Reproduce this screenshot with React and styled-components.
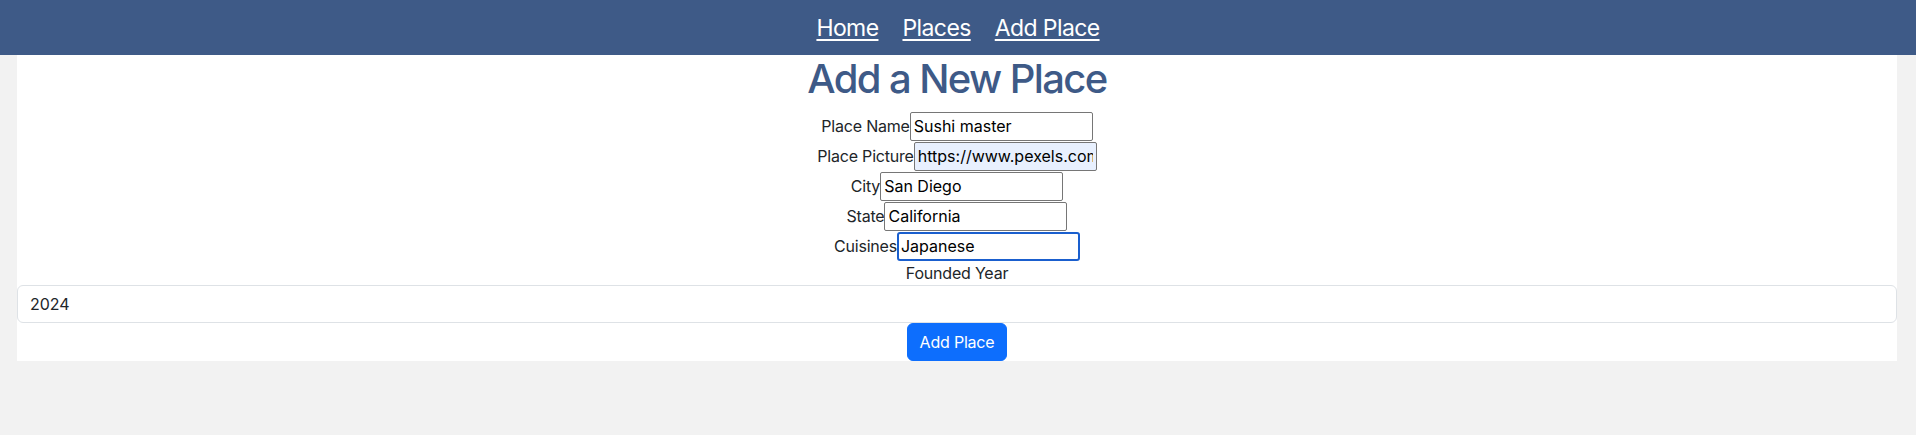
import { createGlobalStyle, styled } from "styled-components"

const GlobalStyle = createGlobalStyle`
  *, *::before, *::after {
    box-sizing: border-box;
  }

  body {
    margin: 0;
    background: #f2f2f2;
    font-family: Inter, "Noto Sans", "Liberation Sans", sans-serif;
    font-size: 16px;
    line-height: 1.5;
    color: #212529;
  }
`

const Nav = styled.nav`
  height: 55px;
  display: flex;
  justify-content: center;
  align-items: center;
  gap: 24px;
  background: #3e5a87;
  padding-top: 2px;
`

const NavLink = styled.a`
  font-size: 23px;
  line-height: 1.2;
  color: #ffffff;
  text-decoration: underline;
  text-underline-offset: 3px;
  text-decoration-thickness: 2px;
  letter-spacing: -0.6px;
`

const Main = styled.main`
  margin: 0 19px 0 17px;
  background: #ffffff;
  text-align: center;
`

const Title = styled.h1`
  margin: 0 0 8px;
  font-size: 40px;
  font-weight: 550;
  line-height: 1.2;
  letter-spacing: -1.6px;
  color: #3e5a87;
`

const Form = styled.form`
  display: flex;
  flex-direction: column;
  align-items: stretch;
`

const Row = styled.div`
  height: 30px;
  display: flex;
  justify-content: center;
  align-items: center;
`

const Label = styled.label`
  color: #212529;
  letter-spacing: -0.2px;
`

const BlockLabel = styled.label`
  display: block;
  height: 24px;
  line-height: 24px;
  letter-spacing: -0.2px;
`

const TextInput = styled.input`
  width: 183px;
  height: 29px;
  padding: 1px 3px;
  font: inherit;
  font-size: 16px;
  color: #000;
  border: ${(p) => (p.$focused ? "2px solid #1a5fce" : "1px solid #767676")};
  padding-left: ${(p) => (p.$focused ? "2px" : "3px")};
  border-radius: ${(p) => (p.$focused ? "3px" : "2px")};
  background: ${(p) => (p.$autofilled ? "#e8f0fe" : "#fff")};
  outline: none;
`

const WideInput = styled.input`
  display: block;
  width: 100%;
  height: 38px;
  padding: 6px 12px;
  font: inherit;
  color: #212529;
  background: #fff;
  border: 1px solid #dee2e6;
  border-radius: 6px;
  outline: none;
`

const Submit = styled.button`
  align-self: center;
  height: 38px;
  padding: 6px 12px;
  font: inherit;
  color: #fff;
  background: #0d6efd;
  border: 1px solid #0d6efd;
  border-radius: 6px;
  letter-spacing: -0.2px;
`

const fields = [
  { label: "Place Name", value: "Sushi master" },
  { label: "Place Picture", value: "https://www.pexels.com/photo/sushi", autofilled: true },
  { label: "City", value: "San Diego" },
  { label: "State", value: "California" },
  { label: "Cuisines", value: "Japanese", focused: true },
]

export default function App() {
  return (
    <>
      <GlobalStyle />
      <Nav>
        <NavLink href="#">Home</NavLink>
        <NavLink href="#">Places</NavLink>
        <NavLink href="#">Add Place</NavLink>
      </Nav>
      <Main>
        <Title>Add a New Place</Title>
        <Form onSubmit={(e) => e.preventDefault()}>
          {fields.map((f) => (
            <Row key={f.label}>
              <Label>{f.label}</Label>
              <TextInput
                defaultValue={f.value}
                $autofilled={f.autofilled}
                $focused={f.focused}
              />
            </Row>
          ))}
          <BlockLabel>Founded Year</BlockLabel>
          <WideInput defaultValue="2024" />
          <Submit type="submit">Add Place</Submit>
        </Form>
      </Main>
    </>
  )
}
